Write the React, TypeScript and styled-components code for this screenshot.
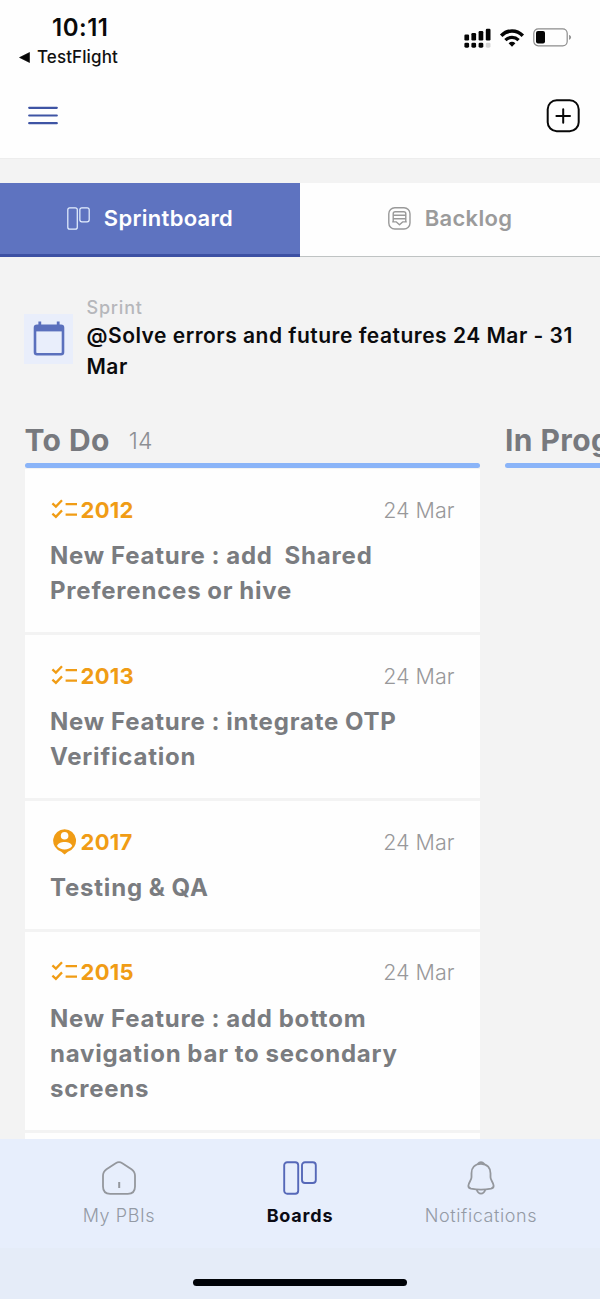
import React from "react";
import styled, { createGlobalStyle } from "styled-components";

const GlobalStyle = createGlobalStyle`
  * { box-sizing: border-box; }
  body { margin: 0; background: #f3f3f3; font-family: Inter, "Liberation Sans", sans-serif; }
`;

const Screen = styled.div`
  width: 600px;
  height: 1299px;
  display: flex;
  flex-direction: column;
  overflow: hidden;
  background: #f3f3f3;
`;

const StatusBar = styled.header`
  flex: none;
  height: 74px;
  padding: 14px 28px 0 19px;
  display: flex;
  justify-content: space-between;
  background: #fefefe;
`;

const ClockGroup = styled.div`
  display: flex;
  flex-direction: column;
`;

const Clock = styled.span`
  padding-left: 33px;
  font-size: 24px;
  line-height: 28px;
  font-weight: 600;
  letter-spacing: 0.5px;
  color: #0a0a0a;
`;

const BackLink = styled.span`
  display: flex;
  align-items: center;
  gap: 7px;
  margin-top: 5px;
  font-size: 17px;
  line-height: 20px;
  letter-spacing: 0.1px;
  font-weight: 450;
  color: #111;
`;

const StatusIcons = styled.div`
  display: flex;
  align-items: flex-start;
  padding-top: 14px;
  gap: 8px;
`;

const AppBar = styled.div`
  flex: none;
  height: 85px;
  padding: 25px 20px 0 28px;
  display: flex;
  justify-content: space-between;
  align-items: flex-start;
  background: #fefefe;
  border-bottom: 1px solid #ededed;
`;

const MenuButton = styled.button`
  padding: 0;
  margin: 7px 0 0;
  border: 0;
  background: none;
  line-height: 0;
`;

const AddButton = styled.button`
  padding: 0;
  border: 0;
  background: none;
  line-height: 0;
`;

const Tabs = styled.nav`
  flex: none;
  display: grid;
  grid-template-columns: 1fr 1fr;
  height: 74px;
  margin-top: 24px;
`;

const Tab = styled.button<{ $active?: boolean }>`
  display: flex;
  align-items: center;
  justify-content: center;
  gap: 14px;
  padding: 0;
  border: 0;
  border-bottom: ${(p) => (p.$active ? "3px solid #3c50a3" : "1px solid #bfc3c3")};
  background: ${(p) => (p.$active ? "#5e73c0" : "#fefefe")};
  color: ${(p) => (p.$active ? "#fff" : "#9b9b9b")};
  font-family: inherit;
  font-size: 22px;
  font-weight: 600;
  letter-spacing: 0.3px;
  & > span { margin-top: ${(p) => (p.$active ? "-2px" : "-4px")}; }
  & > svg { margin-top: ${(p) => (p.$active ? "0" : "-2px")}; }
`;

const SprintInfo = styled.section`
  flex: none;
  display: flex;
  gap: 13.5px;
  height: 161px;
  padding: 40px 20px 0 24px;
`;

const CalendarTile = styled.div`
  flex: none;
  display: flex;
  align-items: center;
  justify-content: center;
  width: 49px;
  height: 50px;
  margin-top: 17px;
  padding-bottom: 2px;
  background: #e9eefb;
`;

const SprintLabel = styled.div`
  font-size: 18px;
  line-height: 22px;
  font-weight: 500;
  letter-spacing: 0.8px;
  color: #b6b7bb;
`;

const SprintTitle = styled.div`
  margin-top: 2px;
  font-size: 21px;
  line-height: 30.5px;
  font-weight: 600;
  letter-spacing: 0.5px;
  color: #0b0b0d;
`;

const Board = styled.main`
  flex: 1;
  min-height: 0;
  display: flex;
  gap: 25px;
  padding-left: 24.5px;
  overflow: hidden;
`;

const Column = styled.section`
  flex: none;
  width: 455.5px;
`;

const ColumnHeader = styled.h2`
  display: flex;
  align-items: flex-start;
  gap: 19px;
  height: 45px;
  margin: 0;
  padding-top: 4px;
  font-size: 30px;
  line-height: 36px;
  font-weight: 700;
  letter-spacing: 0.4px;
  white-space: nowrap;
  color: #77797e;
`;

const Count = styled.span`
  font-size: 23px;
  line-height: 39px;
  font-weight: 300;
  letter-spacing: 0.3px;
  color: #8d8f93;
`;

const ColumnRule = styled.div`
  height: 5px;
  border-radius: 2.5px;
  background: #8ab4f8;
`;

const CardList = styled.div`
  display: flex;
  flex-direction: column;
  gap: 3px;
  margin-top: 1px;
`;

const CardBox = styled.article`
  padding: 23.5px 25.5px 23.8px;
  background: #fefefe;
`;

const CardTop = styled.div`
  display: flex;
  align-items: center;
  height: 34px;
`;

const CardIcon = styled.span`
  width: 30.5px;
  height: 28px;
  line-height: 0;
`;

const CardId = styled.span`
  flex: 1;
  font-size: 22px;
  font-weight: 650;
  letter-spacing: 0.3px;
  color: #f09c15;
`;

const CardDate = styled.span`
  font-size: 21.5px;
  font-weight: 350;
  letter-spacing: 0;
  color: #98989a;
`;

const CardTitle = styled.h3`
  margin: 11.2px 0 0;
  font-size: 24px;
  line-height: 35.3px;
  font-weight: 650;
  letter-spacing: 0.8px;
  word-spacing: -0.6px;
  white-space: pre-wrap;
  color: #7a7c80;
`;

const BottomBar = styled.footer`
  flex: none;
  display: flex;
  flex-direction: column;
  align-items: center;
  height: 160.5px;
  background: linear-gradient(#e7eefc 0 68%, #e5ecf8 68%);
`;

const BottomTabs = styled.nav`
  display: grid;
  grid-template-columns: repeat(3, 181px);
  height: 140px;
`;

const BottomTab = styled.button<{ $active?: boolean }>`
  display: flex;
  flex-direction: column;
  align-items: center;
  gap: 9px;
  padding: 22px 0 0;
  border: 0;
  background: none;
  font-family: inherit;
  font-size: 18px;
  line-height: 24px;
  font-weight: ${(p) => (p.$active ? 700 : 300)};
  letter-spacing: ${(p) => (p.$active ? "0.8px" : "0.6px")};
  color: ${(p) => (p.$active ? "#0b0b14" : "#949aa5")};
  & > svg { flex: none; }
`;

const HomeIndicator = styled.div`
  width: 214px;
  height: 7px;
  border-radius: 4px;
  background: #000308;
`;

const MenuIcon = () => (
  <svg width="30" height="20" viewBox="0 0 30 20" stroke="#3e54a4" strokeWidth="2.2" strokeLinecap="round">
    <path d="M1.2 1.8H28.8M1.2 9.5H28.8M1.2 17.2H28.8" />
  </svg>
);

const SignalIcon = () => (
  <svg width="27" height="20" viewBox="0 0 27 20" fill="#050505">
    <rect x="0.4" y="6.5" width="4.7" height="6" rx="1.2" />
    <rect x="7.4" y="5" width="4.7" height="7.5" rx="1.2" />
    <rect x="14.6" y="3" width="4.7" height="9.5" rx="1.2" />
    <rect x="21.8" y="0.8" width="4.7" height="11.7" rx="1.2" />
    <rect x="0.4" y="14.7" width="4.7" height="5" rx="1.4" />
    <rect x="7.4" y="14.7" width="4.7" height="5" rx="1.4" />
    <rect x="14.6" y="14.7" width="4.7" height="5" rx="1.4" />
    <rect x="21.8" y="14.7" width="4.7" height="5" rx="1.4" fill="#d5d5d5" />
  </svg>
);

const WifiIcon = () => (
  <svg width="26" height="20" viewBox="0 0 26 20" fill="none" stroke="#050505">
    <path d="M2.2 7.7C8.5 1.4 17.5 1.4 23.8 7.7" strokeWidth="3.5" />
    <path d="M6.4 12.1C10.2 8.5 15.8 8.5 19.6 12.1" strokeWidth="3.3" />
    <path d="M9.6 15.2Q13 12.3 16.4 15.2L13 18.8Z" fill="#050505" stroke="none" />
  </svg>
);

const BatteryIcon = () => (
  <svg width="39" height="19" viewBox="0 0 39 19">
    <rect x="0.8" y="0.8" width="33.4" height="17" rx="4.5" fill="none" stroke="#8c8c8c" strokeWidth="1.2" />
    <rect x="3" y="3" width="9" height="12.6" rx="2" fill="#050505" />
    <path d="M36.6 7.3Q38.6 9.3 36.6 11.4Z" fill="#777" stroke="#777" strokeWidth="0.6" />
  </svg>
);

const AddIcon = () => (
  <svg width="34" height="34" viewBox="0 0 34 34" fill="none" stroke="#080808" strokeWidth="2">
    <rect x="1.7" y="1.2" width="31" height="31" rx="9" />
    <path d="M17.2 10.2v13.6M10.4 17h13.6" strokeLinecap="round" />
  </svg>
);

const BoardIcon = ({ size, stroke, width }: { size: number; stroke: string; width: number }) => (
  <svg width={size} height={size} viewBox="0 0 34 34" fill="none" stroke={stroke} strokeWidth={width}>
    <rect x="1.2" y="1.2" width="14" height="31.6" rx="3" />
    <rect x="19" y="1.2" width="13.8" height="20.8" rx="3" />
  </svg>
);

const BacklogIcon = () => (
  <svg width="23" height="23" viewBox="0 0 23 23" fill="none" stroke="#999" strokeWidth="1.4" strokeLinejoin="round">
    <rect x="0.8" y="0.8" width="21.2" height="21.2" rx="6" />
    <path d="M5.2 14.5V6.8Q5.2 4.8 7.2 4.8H15.8Q17.8 4.8 17.8 6.8V14.5M5.2 8.3H17.8M5.2 11.7H17.8M4.2 14.9H8.4L11.5 17.8L14.6 14.9H18.8" />
  </svg>
);

const CalendarIcon = () => (
  <svg width="32" height="35" viewBox="0 0 32 35" fill="none">
    <rect x="2" y="4.8" width="28" height="28.4" rx="2" stroke="#5b70bd" strokeWidth="2.6" />
    <path d="M2 4h28v6.4H2z" fill="#5b70bd" />
    <path d="M6.8 0.6V5M25.2 0.6V5" stroke="#5b70bd" strokeWidth="2.8" />
  </svg>
);

const ChecklistIcon = () => (
  <svg width="27" height="28" viewBox="0 0 27 28" fill="none" stroke="#f09c15" strokeWidth="2.3">
    <path d="M2.4 7.4 5.9 10.6 12 4.2M2.4 17.6 5.9 20.8 12 14.4M15.6 8.2H27M15.6 18.6H27" />
  </svg>
);

const PersonPinIcon = () => (
  <svg width="27" height="28" viewBox="0 0 27 28">
    <path d="M14.6 1.2a11.5 11.5 0 0 1 3.3 22.5L14.6 26.6l-3.3-2.9A11.5 11.5 0 0 1 14.6 1.2Z" fill="#f09c15" />
    <circle cx="14.6" cy="7.8" r="3.8" fill="#fefefe" />
    <path d="M7 18C8.7 12.7 20.5 12.7 22.2 18 19.2 22.6 10 22.6 7 18Z" fill="#fefefe" />
  </svg>
);

const HomeIcon = () => (
  <svg width="34" height="34" viewBox="0 0 34 34" fill="none" stroke="#94979d" strokeWidth="1.8">
    <path d="M13.7 2.2Q17 .2 20.3 2.2L29.5 8.2Q33 10.6 33 14.8V25.5Q33 32.8 25.8 32.8H8.2Q1 32.8 1 25.5V14.8Q1 10.6 4.5 8.2Z" />
    <path d="M17.2 21V27" strokeWidth="2" />
  </svg>
);

const BellIcon = () => (
  <svg width="34" height="34" viewBox="0 0 34 34" fill="none" stroke="#94979d" strokeWidth="1.8" strokeLinejoin="round">
    <path d="M17 2.8C10.5 2.8 7.5 7.2 7.5 12.2V16.2C7.5 19.2 4.6 21.5 4.4 24.5 4.2 26.4 5.2 27.2 7 27.6Q17 29.5 27 27.6C28.8 27.2 29.8 26.4 29.6 24.5 29.4 21.5 26.5 19.2 26.5 16.2V12.2C26.5 7.2 23.5 2.8 17 2.8Z" />
    <path d="M13.6 3.2Q17 -.7 20.4 3.2M12.8 28.8Q14 32.6 17 32.6T21.2 28.8" />
  </svg>
);

type Item = { id: string; title: string; kind: "task" | "person" };

const items: Item[] = [
  { id: "2012", title: "New Feature : add  Shared Preferences or hive", kind: "task" },
  { id: "2013", title: "New Feature : integrate OTP Verification", kind: "task" },
  { id: "2017", title: "Testing & QA", kind: "person" },
  { id: "2015", title: "New Feature : add bottom navigation bar to secondary screens", kind: "task" },
];

export default function App() {
  return (
    <>
      <GlobalStyle />
      <Screen>
        <StatusBar>
          <ClockGroup>
            <Clock>10:11</Clock>
            <BackLink>
              <svg width="11" height="11" viewBox="0 0 11 11">
                <path d="M0.5 5.5 10.5 0.5v10z" fill="#050505" stroke="#050505" strokeWidth="0.6" />
              </svg>
              TestFlight
            </BackLink>
          </ClockGroup>
          <StatusIcons>
            <SignalIcon />
            <WifiIcon />
            <BatteryIcon />
          </StatusIcons>
        </StatusBar>
        <AppBar>
          <MenuButton aria-label="Menu">
            <MenuIcon />
          </MenuButton>
          <AddButton aria-label="Add">
            <AddIcon />
          </AddButton>
        </AppBar>
        <Tabs>
          <Tab $active>
            <BoardIcon size={23} stroke="#e6f1ff" width={1.8} />
            <span>Sprintboard</span>
          </Tab>
          <Tab>
            <BacklogIcon />
            <span>Backlog</span>
          </Tab>
        </Tabs>
        <SprintInfo>
          <CalendarTile>
            <CalendarIcon />
          </CalendarTile>
          <div>
            <SprintLabel>Sprint</SprintLabel>
            <SprintTitle>@Solve errors and future features 24 Mar - 31 Mar</SprintTitle>
          </div>
        </SprintInfo>
        <Board>
          <Column>
            <ColumnHeader>
              To Do <Count>14</Count>
            </ColumnHeader>
            <ColumnRule />
            <CardList>
              {items.map((item) => (
                <CardBox key={item.id}>
                  <CardTop>
                    <CardIcon>{item.kind === "task" ? <ChecklistIcon /> : <PersonPinIcon />}</CardIcon>
                    <CardId>{item.id}</CardId>
                    <CardDate>24 Mar</CardDate>
                  </CardTop>
                  <CardTitle>{item.title}</CardTitle>
                </CardBox>
              ))}
              <CardBox />
            </CardList>
          </Column>
          <Column>
            <ColumnHeader>In Progress</ColumnHeader>
            <ColumnRule />
          </Column>
        </Board>
        <BottomBar>
          <BottomTabs>
            <BottomTab>
              <HomeIcon />
              My PBIs
            </BottomTab>
            <BottomTab $active>
              <BoardIcon size={34} stroke="#5668b8" width={1.9} />
              Boards
            </BottomTab>
            <BottomTab>
              <BellIcon />
              Notifications
            </BottomTab>
          </BottomTabs>
          <HomeIndicator />
        </BottomBar>
      </Screen>
    </>
  );
}
